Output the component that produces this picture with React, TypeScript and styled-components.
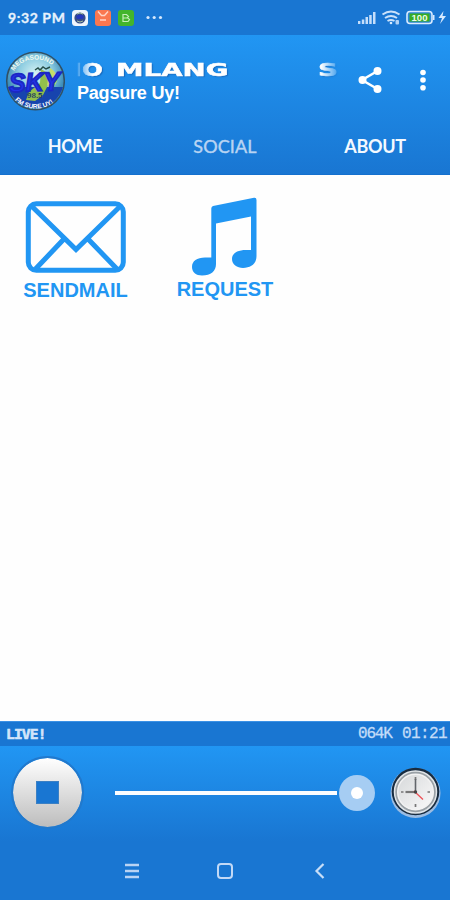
import React from "react";
import styled, { createGlobalStyle } from "styled-components";

const Global = createGlobalStyle`
  * { box-sizing: border-box; }
  body { margin: 0; background: #fff; }
  svg { display: block; flex: none; }
`;

const Screen = styled.div`
  width: 450px;
  height: 900px;
  display: flex;
  flex-direction: column;
  overflow: hidden;
  background: #fefefe;
  font-family: "Liberation Sans", Arial, sans-serif;
  color: #fff;
`;

const StatusBar = styled.div`
  height: 35px;
  flex: none;
  padding: 0 2px 0 8px;
  display: flex;
  align-items: center;
  justify-content: space-between;
  background: #1976d2;
`;

const StatusGroup = styled.div`
  display: flex;
  align-items: center;
  gap: 7px;
`;

const Clock = styled.span`
  width: 57px;
  font: 700 14px/35px Lato, sans-serif;
  letter-spacing: 0.6px;
  white-space: nowrap;
  color: #e6f1fc;
  -webkit-text-stroke: 0.3px #e6f1fc;
`;

const Header = styled.header`
  height: 140px;
  flex: none;
  background: linear-gradient(#2196f3, #1976d2);
  border-bottom: 1px solid #1470ce;
`;

const TitleRow = styled.div`
  height: 82px;
  padding: 15px 12px 0 5px;
  display: flex;
`;

const Titles = styled.div`
  width: 262px;
  margin: 10px 0 0 12px;
`;

const Marquee = styled.div`
  height: 21px;
  display: flex;
  overflow: hidden;
  font: 700 17.5px/20px "DejaVu Sans", sans-serif;
  text-shadow: 1px 1px 1px #1668bd;
  -webkit-text-stroke: 0.5px #fff;
  mask-image: linear-gradient(90deg, rgba(0, 0, 0, 0.15) 0, #000 16px, #000 244px, transparent 264px);
`;

const Wide = styled.span<{ $w: number; $scale: number }>`
  width: ${(p) => p.$w}px;
  flex: none;
  white-space: pre;
  transform: scaleX(${(p) => p.$scale});
  transform-origin: left;
`;

const Subtitle = styled.div`
  margin-top: 2px;
  font: 700 18px/21px "Liberation Sans", Arial, sans-serif;
  letter-spacing: -0.2px;
  white-space: nowrap;
`;

const Actions = styled.div`
  margin: 16px 0 0 19px;
  display: flex;
  gap: 37px;
`;

const Tabs = styled.nav`
  height: 57px;
  display: grid;
  grid-template-columns: repeat(3, 150px);
`;

const Tab = styled.div<{ $active?: boolean }>`
  text-align: center;
  font: ${(p) => (p.$active ? 400 : 700)} 18px/58px Lato, sans-serif;
  letter-spacing: ${(p) => (p.$active ? 0.1 : -0.3)}px;
  color: ${(p) => (p.$active ? "#b9d4f3" : "#f4f9ff")};
  -webkit-text-stroke: ${(p) => (p.$active ? "0.4px #b9d4f3" : "0")};
`;

const Content = styled.main`
  height: 546px;
  flex: none;
  padding: 20px 0 0 1px;
  display: grid;
  grid-template-columns: 149px 150px 150px;
  align-items: start;
`;

const Tile = styled.div`
  display: flex;
  flex-direction: column;
  align-items: center;
  color: #2196f3;
`;

const TileLabel = styled.span`
  font: 700 20px/23px "Liberation Sans", Arial, sans-serif;
`;

const InfoBar = styled.div`
  height: 25px;
  flex: none;
  padding: 0 4px 0 6px;
  display: flex;
  align-items: center;
  background: #1976d2;
  border-top: 1px solid #3b91e5;
`;

const Live = styled.span`
  flex: 1;
  font: 700 14.5px/24px "DejaVu Sans Mono", monospace;
  letter-spacing: -0.8px;
  color: #d3e5fa;
  -webkit-text-stroke: 0.6px #d3e5fa;
`;

const Digits = styled.span<{ $w: number; $spacing: number }>`
  width: ${(p) => p.$w}px;
  font: 400 16px/24px "Liberation Mono", monospace;
  letter-spacing: ${(p) => p.$spacing}px;
  white-space: nowrap;
  color: #c3dcf8;
  -webkit-text-stroke: 0.3px #c3dcf8;
`;

const Player = styled.div`
  height: 95px;
  flex: none;
  padding: 0 8px 2px 11px;
  display: flex;
  align-items: center;
  background: linear-gradient(#2196f3, #1976d2);
`;

const StopButton = styled.button`
  width: 73px;
  height: 73px;
  padding: 0;
  border: 2px solid #2179cd;
  border-radius: 50%;
  background: linear-gradient(#fff, #bdbdbd);
  background-clip: padding-box;
  display: grid;
  place-items: center;
`;

const StopMark = styled.span`
  width: 23px;
  height: 23px;
  background: #1976d2;
  border: 1px solid #3b80c4;
`;

const Slider = styled.div`
  width: 260px;
  margin-left: 31px;
  display: flex;
  align-items: center;
`;

const Track = styled.div`
  flex: 1;
  height: 4px;
  background: #fbfdff;
`;

const Thumb = styled.div`
  width: 36px;
  height: 36px;
  border-radius: 50%;
  background: #a6cdf3;
  display: grid;
  place-items: center;
  margin-left: 2px;
  &::after {
    content: "";
    width: 12px;
    height: 12px;
    border-radius: 50%;
    background: #fff;
  }
`;

const ClockHolder = styled.div`
  margin-left: auto;
`;

const NavBar = styled.div`
  height: 59px;
  flex: none;
  padding-left: 2px;
  display: flex;
  justify-content: center;
  align-items: center;
  gap: 76px;
  background: #1976d2;
`;

const StationLogo = () => (
  <svg width="60" height="62" viewBox="0 0 60 62">
    <defs>
      <radialGradient id="globe" cx="50%" cy="38%">
        <stop offset="0" stopColor="#d8f4f5" />
        <stop offset=".6" stopColor="#8bcbe0" />
        <stop offset="1" stopColor="#3c8dba" />
      </radialGradient>
      <path id="arcTop" d="M8 27A22.500 17.500 0 0 1 53 27" />
      <path id="arcBottom" d="M5 38A25.500 20.500 0 0 0 56 38" />
    </defs>
    <circle cx="30.500" cy="31" r="28.800" fill="url(#globe)" stroke="#315064" strokeWidth="1.500" />
    <path d="M3 37h55A28.500 28.500 0 0 1 3 37Z" fill="#1744ae" />
    <path d="M36 19c6 3 10 7 9 12l-7 14-8 6-9-1 3-8 11-9z" fill="#93bf4b" />
    <path d="M45 18c5 3 8 8 7 13l-5 10-5-6z" fill="#c6dc69" />
    <path d="M30 20l3-2 2 2 3-3 3 2 4-2" stroke="#264e49" strokeWidth="1.500" fill="none" />
    <g fontFamily="Liberation Sans, sans-serif" fontWeight="700">
      <text fontSize="6.500" fill="#f2faef">
        <textPath href="#arcTop" startOffset="6">MEGASOUND</textPath>
      </text>
      <text x="4" y="41" fontSize="26" fontStyle="italic" textLength="51" lengthAdjust="spacingAndGlyphs" fill="#2433e8" stroke="#1b28c4" strokeWidth="1.800" transform="rotate(-2 30 35)">SKY</text>
      <text x="22" y="48" fontSize="8" fill="#071857" stroke="#9acb6a" strokeWidth=".2">98.5</text>
      <text fontSize="6.500" fill="#fff">
        <textPath href="#arcBottom" startOffset="13">FM SURE UY!</textPath>
      </text>
    </g>
  </svg>
);

const AppIcons = () => (
  <>
    <svg width="16" height="16" viewBox="0 0 16 16">
      <rect width="16" height="16" rx="3.500" fill="#eef5fc" />
      <circle cx="8" cy="8" r="5.600" fill="#354d88" />
      <path d="M4 6q4-3 8 0l-1 3H5z" fill="#2437bb" />
      <path d="M5 11q3 2 6 0M5 4q3-2 6 0" stroke="#a6bea4" fill="none" />
    </svg>
    <svg width="16" height="16" viewBox="0 0 16 16">
      <rect width="16" height="16" rx="3" fill="#fa7750" />
      <path d="M3 1.500l3.500 4h3l3.500-4M5 10h6" stroke="#ffd5c7" strokeWidth="1.400" fill="none" />
    </svg>
    <svg width="16" height="16" viewBox="0 0 16 16">
      <rect width="16" height="16" rx="3" fill="#43b52b" />
      <path d="M5 4.500h3.500l2 2-1.500 1.500H5zM5 8h5l1.500 1.500-1.500 2H5z" stroke="#c6efb8" strokeWidth="1.200" fill="none" />
    </svg>
  </>
);

const MoreDots = () => (
  <svg width="24" height="16" viewBox="0 0 24 16" fill="#d5e8fd">
    <circle cx="7" cy="7.500" r="1.600" /><circle cx="13.200" cy="7.500" r="1.600" /><circle cx="19.500" cy="7.500" r="1.600" />
  </svg>
);

const SystemIcons = () => (
  <svg width="90" height="16" viewBox="358 10 90 16" fill="#d7eaff">
    <path d="M358 21h2.400v3H358zM361.800 19.500h2.500V24h-2.500zM365.500 17h2.500v7h-2.500zM369.200 15h2.500v9h-2.500zM373 12h2.500v12H373z" opacity=".9" />
    <g fill="none" stroke="#c9e1fa" strokeWidth="1.900">
      <path d="M382.500 14.500q8.500-6 17 0M385 18q6-4 12 0M387.500 21q3.500-2 7 0" />
    </g>
    <circle cx="391" cy="23" r="1.300" /><rect x="395.500" y="20" width="3.500" height="4.500" rx="1" opacity=".8" />
    <rect x="407" y="11.500" width="25" height="12" rx="3" fill="#2c86d5" stroke="#d8eaff" strokeWidth="1.600" />
    <rect x="409.500" y="13.500" width="20" height="8" fill="#36ad24" />
    <path d="M433 15h1.500v5H433z" />
    <text x="411.500" y="20.800" fontSize="9" fontFamily="Liberation Sans, sans-serif" fontWeight="700" textLength="16" lengthAdjust="spacingAndGlyphs" fill="#eefbea">100</text>
    <path d="M443.500 11l-5 7h3.500l-2 6 6-8h-3.500z" />
  </svg>
);

const ShareIcon = () => (
  <svg width="24" height="28" viewBox="0 0 24 28" fill="#fff">
    <path d="M19.500 5L4 14l15.500 9" fill="none" stroke="#fff" strokeWidth="2.500" />
    <circle cx="19.500" cy="5" r="4" /><circle cx="4.500" cy="14" r="4" /><circle cx="19.500" cy="23" r="4" />
  </svg>
);

const OverflowIcon = () => (
  <svg width="8" height="28" viewBox="0 0 8 28" fill="#fff">
    <circle cx="4" cy="6.500" r="2.800" /><circle cx="4" cy="14" r="2.800" /><circle cx="4" cy="21.700" r="2.800" />
  </svg>
);

const MailIcon = () => (
  <svg width="102" height="84" viewBox="25 195 102 84" fill="none" stroke="#2196f3" strokeWidth="5">
    <rect x="28.300" y="203.800" width="95" height="66.500" rx="8" />
    <path d="M31 205.500L76 249.500L121 205.500M35.500 269L63 240M117 269L89 240" />
  </svg>
);

const NoteIcon = () => (
  <svg width="66" height="83" viewBox="192 195 66 83">
    <path fill="#2196f3" d="M213 206Q211.300 206.500 211.300 208.500V257.500H205C197 257.500 192 261 192 267C192 272 196 275.500 202 275.500C211 275.500 216 271 216 264V223.500L251 216.500V250H246C237 250 232 253.500 232 259C232 264.500 237 268 243 268C251 268 256.500 264 256.500 256V200Q256.500 197.300 254 197.700Z" />
  </svg>
);

const AnalogClock = () => (
  <svg width="53" height="53" viewBox="0 0 53 53">
    <defs>
      <linearGradient id="clockFace" x1="0" y1="0" x2="1" y2="1">
        <stop offset="0" stopColor="#d6d8da" /><stop offset="1" stopColor="#fafafa" />
      </linearGradient>
    </defs>
    <circle cx="26.500" cy="27" r="25" fill="#9bbce2" />
    <circle cx="26.500" cy="25.500" r="23.800" fill="#182c40" />
    <circle cx="26.500" cy="26" r="21" fill="#9aa1a6" stroke="#e2e6e9" strokeWidth="1.500" />
    <circle cx="26.500" cy="26" r="17.800" fill="url(#clockFace)" stroke="#f3f3f3" strokeWidth="1.500" />
    <g stroke="#777" strokeWidth="1.700">
      <path d="M26.500 11v3M26.500 38v3M12 26h2.500M38.500 26H41" />
      <path d="M16.500 26h10" strokeWidth="2.200" />
      <path d="M26.500 27V13" stroke="#62666b" strokeWidth="1.600" />
      <path d="M25 25l9 8.500" stroke="#ed4f55" strokeWidth="1.300" />
    </g>
    <circle cx="26.500" cy="26" r="1.700" fill="#444" />
  </svg>
);

const NavIcons = () => (
  <>
    <svg width="16" height="18" viewBox="0 0 16 18">
      <path d="M1 3h14M1 9h14M1 15h14" stroke="#b9d3f4" strokeWidth="2.400" />
    </svg>
    <svg width="18" height="18" viewBox="0 0 18 18">
      <rect x="2" y="2" width="14" height="14" rx="3" fill="none" stroke="#c2d9f6" strokeWidth="2" />
    </svg>
    <svg width="18" height="18" viewBox="0 0 18 18">
      <path d="M13.500 2L6.500 9l7 7" fill="none" stroke="#c7def8" strokeWidth="2.200" />
    </svg>
  </>
);

export default function App() {
  return (
    <Screen>
      <Global />
      <StatusBar>
        <StatusGroup>
          <Clock>9:32 PM</Clock>
          <AppIcons />
          <MoreDots />
        </StatusGroup>
        <SystemIcons />
      </StatusBar>
      <Header>
        <TitleRow>
          <StationLogo />
          <Titles>
            <Marquee>
              <Wide $w={5} $scale={0.6}>I</Wide>
              <Wide $w={34} $scale={1.4}>O</Wide>
              <Wide $w={202} $scale={1.58}>MLANG</Wide>
              <Wide $w={21} $scale={1.6}>S</Wide>
            </Marquee>
            <Subtitle>Pagsure Uy!</Subtitle>
          </Titles>
          <Actions>
            <ShareIcon />
            <OverflowIcon />
          </Actions>
        </TitleRow>
        <Tabs>
          <Tab>HOME</Tab>
          <Tab $active>SOCIAL</Tab>
          <Tab>ABOUT</Tab>
        </Tabs>
      </Header>
      <Content>
        <Tile>
          <MailIcon />
          <TileLabel>SENDMAIL</TileLabel>
        </Tile>
        <Tile>
          <NoteIcon />
          <TileLabel>REQUEST</TileLabel>
        </Tile>
      </Content>
      <InfoBar>
        <Live>LIVE!</Live>
        <Digits $w={44} $spacing={-1.2}>064K</Digits>
        <Digits $w={44} $spacing={-0.6}>01:21</Digits>
      </InfoBar>
      <Player>
        <StopButton aria-label="Stop"><StopMark /></StopButton>
        <Slider>
          <Track />
          <Thumb />
        </Slider>
        <ClockHolder><AnalogClock /></ClockHolder>
      </Player>
      <NavBar>
        <NavIcons />
      </NavBar>
    </Screen>
  );
}
